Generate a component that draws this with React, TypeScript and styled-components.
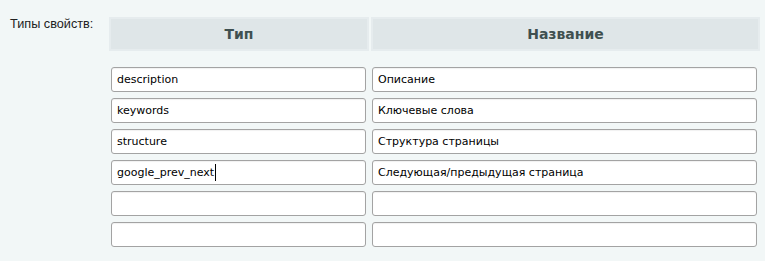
import React from "react";
import styled, { createGlobalStyle } from "styled-components";

const Global = createGlobalStyle`
  html, body { margin: 0; padding: 0; background: #f2f7f7; }
  body { width: 765px; height: 261px; overflow: hidden; }
`;

const Page = styled.div`
  display: grid;
  grid-template-columns: 109px auto;
  align-items: start;
  padding-top: 17px;
`;

const Label = styled.div`
  font-family: "Liberation Sans", Arial, sans-serif;
  font-size: 12.7px;
  color: #222;
  padding-left: 10px;
  line-height: 14px;
`;

const Table = styled.div`
  display: grid;
  grid-template-columns: 262px 389px;
  row-gap: 6px;
`;

const HeadCell = styled.div<{ $last?: boolean }>`
  height: 34px;
  margin-right: ${(p) => (p.$last ? "0" : "2px")};
  margin-bottom: 10px;
  background: #dfe6e8;
  box-shadow: inset 0 0 0 2px #e6ecee;
  display: flex;
  align-items: center;
  justify-content: center;
  font-family: "DejaVu Sans", Verdana, sans-serif;
  font-weight: bold;
  font-size: 14px;
  color: #3f5050;
`;

const Cell = styled.div<{ $last?: boolean }>`
  position: relative;
  padding: ${(p) => (p.$last ? "0 3px 0 1px" : "0 5px 0 2px")};
`;

const Input = styled.input`
  box-sizing: border-box;
  display: block;
  width: 100%;
  height: 25px;
  margin: 0;
  padding: 0 5px;
  border: 1px solid #a3a3a3;
  border-radius: 3px;
  background: #fff;
  font-family: "DejaVu Sans", Tahoma, sans-serif;
  font-size: 11px;
  color: #000;
  outline: none;
  box-shadow: inset 0 1px 1px rgba(0, 0, 0, 0.06);
`;

const Caret = styled.span`
  position: absolute;
  left: 106px;
  top: 4px;
  width: 1px;
  height: 17px;
  background: #000;
`;

const rows: [string, string][] = [
  ["description", "Описание"],
  ["keywords", "Ключевые слова"],
  ["structure", "Структура страницы"],
  ["google_prev_next", "Следующая/предыдущая страница"],
  ["", ""],
  ["", ""],
];

export default function App() {
  return (
    <>
      <Global />
      <Page>
        <Label>Типы свойств:</Label>
        <Table>
          <HeadCell>Тип</HeadCell>
          <HeadCell $last>Название</HeadCell>
          {rows.map(([t, n], i) => (
            <React.Fragment key={i}>
              <Cell>
                <Input defaultValue={t} readOnly />
                {i === 3 && <Caret />}
              </Cell>
              <Cell $last>
                <Input defaultValue={n} readOnly />
              </Cell>
            </React.Fragment>
          ))}
        </Table>
      </Page>
    </>
  );
}
